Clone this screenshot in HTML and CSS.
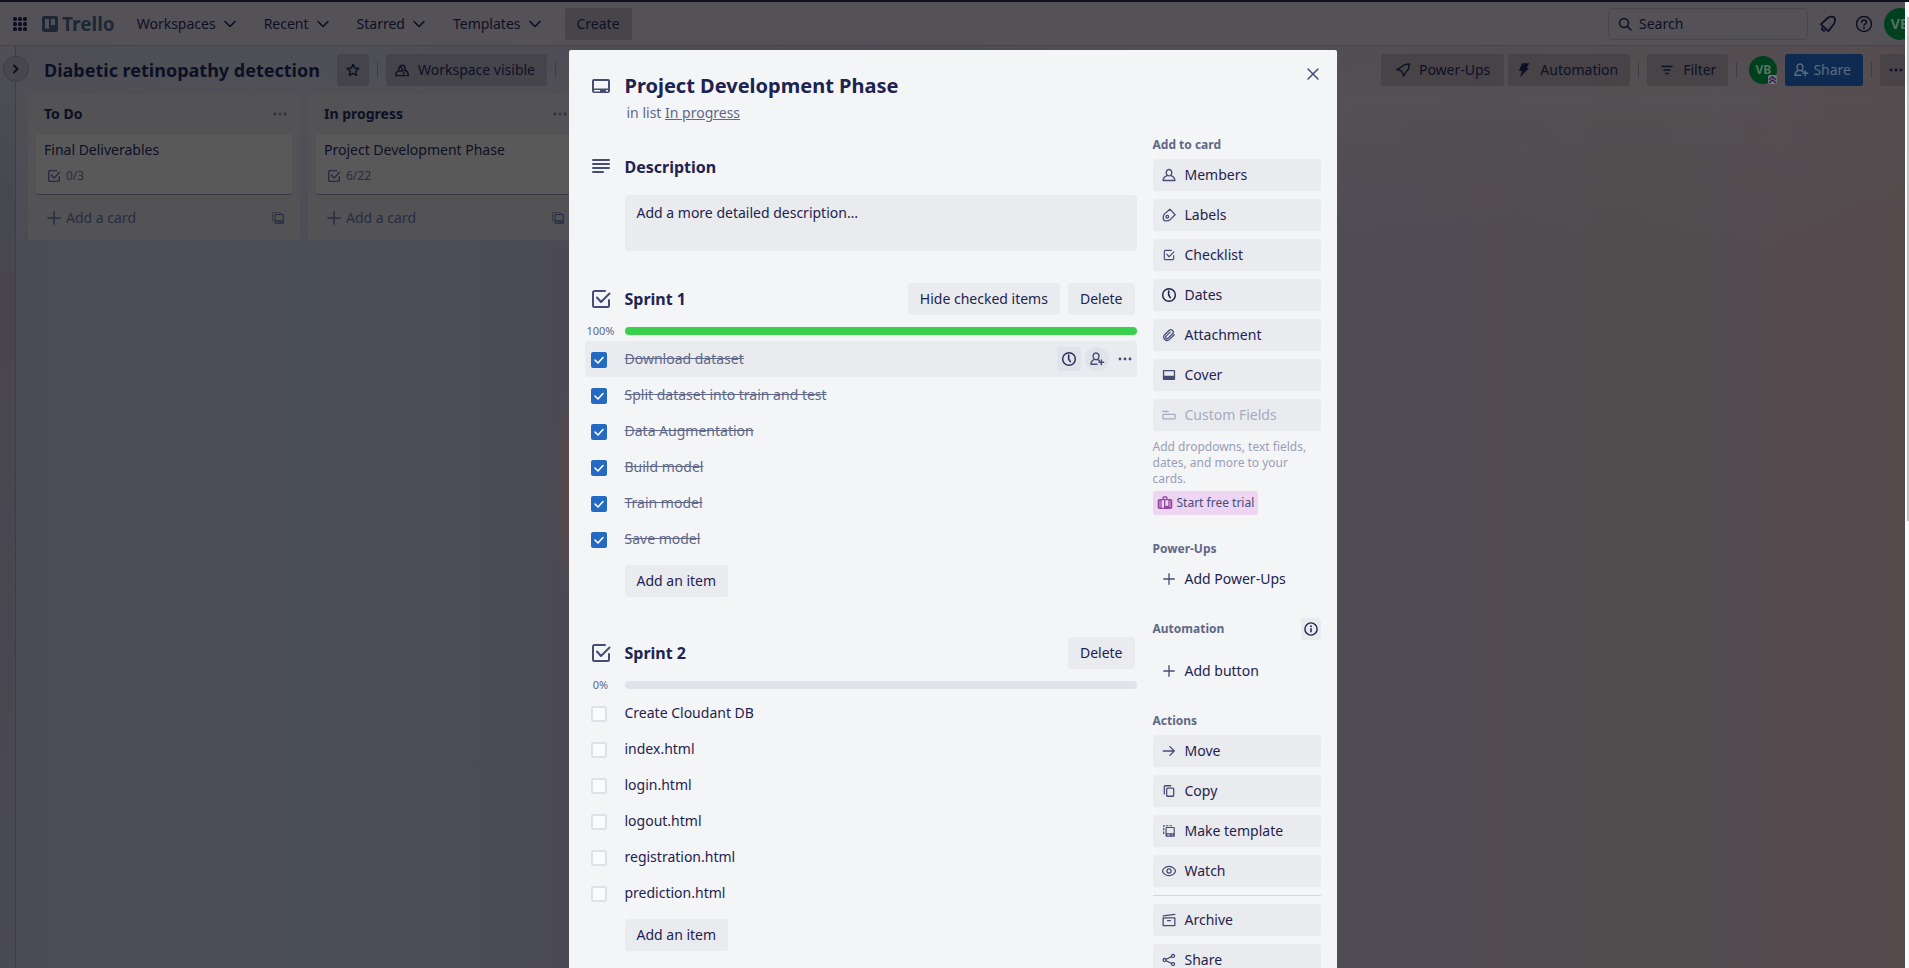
FILE: index.html
```html
<!DOCTYPE html>
<html lang="en">
<head>
<meta charset="utf-8">
<title>Project Development Phase | Trello</title>
<link rel="stylesheet" href="styles.css">
</head>
<body>
<svg class="sprite" aria-hidden="true">
  <symbol id="i-apps" viewBox="0 0 16 16"><g fill="currentColor"><rect x="1" y="1" width="4" height="4" rx="1.5"/><rect x="6" y="1" width="4" height="4" rx="1.5"/><rect x="11" y="1" width="4" height="4" rx="1.5"/><rect x="1" y="6" width="4" height="4" rx="1.5"/><rect x="6" y="6" width="4" height="4" rx="1.5"/><rect x="11" y="6" width="4" height="4" rx="1.5"/><rect x="1" y="11" width="4" height="4" rx="1.5"/><rect x="6" y="11" width="4" height="4" rx="1.5"/><rect x="11" y="11" width="4" height="4" rx="1.5"/></g></symbol>
  <symbol id="i-trello" viewBox="0 0 16 16"><path fill="currentColor" fill-rule="evenodd" d="M2 0h12a2 2 0 0 1 2 2v12a2 2 0 0 1-2 2H2a2 2 0 0 1-2-2V2a2 2 0 0 1 2-2zm1 3v9.500h4V3zm6 0v6h4V3z"/></symbol>
  <symbol id="i-down" viewBox="0 0 16 16"><path class="s" stroke-width="1.600" d="M3 5.500l5 5 5-5"/></symbol>
  <symbol id="i-right" viewBox="0 0 16 16"><path class="s" stroke-width="2" d="M6 4.500L9.500 8 6 11.500"/></symbol>
  <symbol id="i-search" viewBox="0 0 16 16"><circle class="s" cx="7" cy="7" r="4.500"/><path class="s" d="M10.500 10.500L14 14"/></symbol>
  <symbol id="i-bell" viewBox="0 0 24 24"><path class="s" stroke-width="2.400" d="M2.500 12.500L11.500 4c2.500-2 7-2.300 8.700-.8s1.500 6-.4 8.800L12.500 21.500z"/><path class="s" stroke-width="2.400" d="M4 17.500a3 3 0 0 0 3.500 3.300"/></symbol>
  <symbol id="i-help" viewBox="0 0 24 24"><circle class="s" stroke-width="2" cx="12" cy="12" r="10"/><path class="s" stroke-width="2" d="M8.800 9.500c0-4 6.400-4 6.400 0 0 2.300-3.200 2.200-3.200 4.600"/><circle cx="12" cy="17.300" r="1.300" fill="currentColor"/></symbol>
  <symbol id="i-star" viewBox="0 0 24 24"><path class="s" stroke-width="2.200" d="M12 3.500l2.600 5.500 6 .8-4.400 4.200 1.100 6-5.300-2.900L6.700 20l1.100-6-4.400-4.200 6-.8z"/></symbol>
  <symbol id="i-people" viewBox="0 0 24 24"><path class="s" stroke-width="2" d="M7.500 13C4.500 14 2.500 17 2.500 20.500h13c0-3.500-1.500-6.500-4.500-7.500M9.500 7.500a2.800 3 0 1 0 .1 0zM9.500 6a4.200 4.200 0 1 1 6 6c3.500 1 6 4 6 8.500H18.500"/></symbol>
  <symbol id="i-rocket" viewBox="0 0 24 24"><path class="s" stroke-width="2" d="M2.500 11.500L9 8c3-3.500 7-5 12.500-5 0 5-1.500 9-5 12l-3.500 6-2.500-6.500-1.500-1.500z"/></symbol>
  <symbol id="i-bolt" viewBox="0 0 24 24"><path fill="currentColor" d="M9 2h11l-4 7h3.500L6 23l3-9.500H4.500z"/></symbol>
  <symbol id="i-filter" viewBox="0 0 16 16"><path class="s" d="M3 4.500h10M5 8h6M7 11.500h2"/></symbol>
  <symbol id="i-addperson" viewBox="0 0 24 24"><path class="s" stroke-width="2.200" d="M12 20H3c0-3.500 2-6.200 5-7.500m2.500-9.500a4.500 5 0 1 0 .1 0zM13 13c1 .4 2 .9 2.500 1.500M18.500 13.500v7M15 17h7"/></symbol>
  <symbol id="i-dots" viewBox="0 0 16 16"><g fill="currentColor"><circle cx="3" cy="8" r="1.400"/><circle cx="8" cy="8" r="1.400"/><circle cx="13" cy="8" r="1.400"/></g></symbol>
  <symbol id="i-check" viewBox="0 0 24 24"><path class="s" stroke-width="2" d="M16 4H5.500A1.500 1.500 0 0 0 4 5.500v13A1.500 1.500 0 0 0 5.500 20h13a1.500 1.500 0 0 0 1.500-1.500V13M8 10.500l4 4.500 8.500-8.500"/></symbol>
  <symbol id="i-plus" viewBox="0 0 16 16"><path class="s" d="M8 2v12M2 8h12"/></symbol>
  <symbol id="i-template" viewBox="0 0 24 24"><path fill="currentColor" d="M2 2h3v2H4v1H2zm5 0h4v2H7zm6 0h4v2h-4zM2 7h2v4H2zm0 6h2v4H2z"/><path fill="currentColor" fill-rule="evenodd" d="M8 5h12a2 2 0 0 1 2 2v13a2 2 0 0 1-2 2H8a2 2 0 0 1-2-2V7a2 2 0 0 1 2-2zm0 2v9h12V7zm1 11v1.800h5V18zm8 0v1.800h2V18z"/></symbol>
  <symbol id="i-card" viewBox="0 0 24 24"><path fill="currentColor" fill-rule="evenodd" d="M5 5h14a2 2 0 0 1 2 2v10a2 2 0 0 1-2 2H5a2 2 0 0 1-2-2V7a2 2 0 0 1 2-2zm0 2v7.500h14V7zm0 9v1.400h6V16zm12 0v1.400h2V16z"/></symbol>
  <symbol id="i-desc" viewBox="0 0 24 24"><path class="s" stroke-width="2" d="M4 5h16M4 9h16M4 13h16M4 17h10"/></symbol>
  <symbol id="i-close" viewBox="0 0 16 16"><path class="s" d="M3 3l10 10M13 3L3 13"/></symbol>
  <symbol id="i-person" viewBox="0 0 24 24"><path class="s" stroke-width="2.400" d="M8.500 13C4.500 14.500 2 17 2 21.500h20c0-4.500-2.500-7-6.500-8.500M12 2.500a4.800 5.500 0 1 0 .1 0z"/></symbol>
  <symbol id="i-label" viewBox="0 0 24 24"><path class="s" stroke-width="2.200" d="M13.500 2L22.500 11.500 14 20C10 23 5 22.500 3.500 21S1 14 4 10.500z"/><circle class="s" stroke-width="2.200" cx="9" cy="15" r="2.300"/></symbol>
  <symbol id="i-clock" viewBox="0 0 24 24"><circle class="s" stroke-width="2.200" cx="12" cy="12" r="9.500"/><path class="s" stroke-width="2.400" d="M11.500 6v6l2.500 4"/></symbol>
  <symbol id="i-clip" viewBox="0 0 24 24"><path class="s" stroke-width="2.200" d="M21 11.500l-8 8c-5.500 5-13.500-2-8.500-8l8-7.500c4-3 8.800 1.500 6 5.500l-8 8c-2.500 2-5.500-1-3.500-3.500l7-7"/></symbol>
  <symbol id="i-cover" viewBox="0 0 24 24"><path fill="currentColor" fill-rule="evenodd" d="M3 3.500h18a1.500 1.500 0 0 1 1.500 1.500v14a1.500 1.500 0 0 1-1.500 1.500H3A1.500 1.500 0 0 1 1.500 19V5A1.500 1.500 0 0 1 3 3.500zm.8 2.200v7.500h16.400V5.700z"/></symbol>
  <symbol id="i-field" viewBox="0 0 24 24"><path class="s" stroke-width="2.200" d="M1.500 6h9M2.500 11h19a1 1 0 0 1 1 1v5.500a1 1 0 0 1-1 1h-19a1 1 0 0 1-1-1V12a1 1 0 0 1 1-1z"/></symbol>
  <symbol id="i-case" viewBox="0 0 24 24"><path fill="currentColor" fill-rule="evenodd" d="M8 6V4.500A2.500 2.500 0 0 1 10.500 2h3A2.500 2.500 0 0 1 16 4.500V6h4.500A2.500 2.500 0 0 1 23 8.500v10a2.500 2.500 0 0 1-2.500 2.500h-17A2.500 2.500 0 0 1 1 18.500v-10A2.500 2.500 0 0 1 3.500 6zm2 0h4V4h-4zm-3 2v11h3.500V8zm5.500 0v8H17V8zM4 8.500v10h1v-10zm15 0v10h1v-10z"/></symbol>
  <symbol id="i-info" viewBox="0 0 24 24"><circle class="s" stroke-width="2.400" cx="12" cy="12" r="10.500"/><path class="s" stroke-width="2.600" d="M12 11.500v5"/><circle cx="12" cy="7.300" r="1.600" fill="currentColor"/></symbol>
  <symbol id="i-arrow" viewBox="0 0 16 16"><path class="s" d="M1.500 8H14M9 3l5 5-5 5"/></symbol>
  <symbol id="i-copy" viewBox="0 0 24 24"><path class="s" stroke-width="2.200" d="M4 17V4.500A1.500 1.500 0 0 1 5.500 3H15M9.500 7h9A1.500 1.500 0 0 1 20 8.500v11a1.500 1.500 0 0 1-1.500 1.500h-9A1.500 1.500 0 0 1 8 19.500v-11A1.500 1.500 0 0 1 9.500 7z"/></symbol>
  <symbol id="i-eye" viewBox="0 0 24 24"><path class="s" stroke-width="2.200" d="M12 4C5 4 1 9.500 1 12s4 8 11 8 11-5.500 11-8-4-8-11-8z"/><circle class="s" stroke-width="2.200" cx="12" cy="12" r="3.500"/></symbol>
  <symbol id="i-archive" viewBox="0 0 24 24"><path class="s" stroke-width="2.200" d="M2 5L22 2.500M2 8.500h20V21.500H2zM9.500 13h5"/></symbol>
  <symbol id="i-share" viewBox="0 0 24 24"><g class="s" stroke-width="2.200"><circle cx="4.500" cy="12" r="2.600"/><circle cx="19" cy="5" r="2.600"/><circle cx="19" cy="19" r="2.600"/><path d="M7 10.700l9.500-4.500M7 13.300l9.500 4.500"/></g></symbol>
  <symbol id="i-tick" viewBox="0 0 16 16"><path class="s" stroke-width="1.600" d="M4 8l3 3 5-5.500"/></symbol>
  <symbol id="i-badge" viewBox="0 0 10 10"><rect width="10" height="10" rx="2" fill="#77757c"/><path class="s" stroke-width="1.500" d="M1.500 5L5 2l3.500 3M1.500 8.500L5 5.500l3.500 3"/></symbol>
</svg>

<div class="app">
  <header class="topbar">
    <button class="plain apps" aria-label="Apps"><svg class="icon"><use href="#i-apps"/></svg></button>
    <a class="brand" href="#"><svg class="icon"><use href="#i-trello"/></svg>Trello</a>
    <nav class="menu">
      <button class="plain">Workspaces<svg class="icon"><use href="#i-down"/></svg></button>
      <button class="plain">Recent<svg class="icon"><use href="#i-down"/></svg></button>
      <button class="plain">Starred<svg class="icon"><use href="#i-down"/></svg></button>
      <button class="plain">Templates<svg class="icon"><use href="#i-down"/></svg></button>
    </nav>
    <button class="create">Create</button>
    <div class="topbar-right">
      <label class="search"><svg class="icon"><use href="#i-search"/></svg><input type="text" placeholder="Search" aria-label="Search"></label>
      <button class="plain tool" aria-label="Notifications"><svg class="icon large"><use href="#i-bell"/></svg></button>
      <button class="plain tool" aria-label="Help"><svg class="icon large"><use href="#i-help"/></svg></button>
      <button class="avatar big">VB</button>
    </div>
  </header>

  <div class="workspace">
    <aside class="rail"><button class="expand" aria-label="Expand sidebar"><svg class="icon"><use href="#i-right"/></svg></button></aside>
    <main class="board">
      <div class="board-head">
        <h1>Diabetic retinopathy detection</h1>
        <button class="bbtn square" aria-label="Star board"><svg class="icon"><use href="#i-star"/></svg></button>
        <span class="sep"></span>
        <button class="bbtn"><svg class="icon"><use href="#i-people"/></svg>Workspace visible</button>
        <span class="sep"></span>
        <div class="board-tools">
          <div class="pair">
            <button class="bbtn wide"><svg class="icon"><use href="#i-rocket"/></svg>Power-Ups</button>
            <button class="bbtn"><svg class="icon"><use href="#i-bolt"/></svg>Automation</button>
          </div>
          <span class="sep"></span>
          <button class="bbtn even"><svg class="icon"><use href="#i-filter"/></svg>Filter</button>
          <span class="sep"></span>
          <span class="member"><button class="avatar">VB</button><svg class="admin"><use href="#i-badge"/></svg></span>
          <button class="bbtn share"><svg class="icon"><use href="#i-addperson"/></svg>Share</button>
          <span class="sep"></span>
          <button class="bbtn square" aria-label="Show menu"><svg class="icon"><use href="#i-dots"/></svg></button>
        </div>
      </div>
      <div class="lists">
        <section class="list">
          <div class="list-head"><h2>To Do</h2><button class="plain" aria-label="List actions"><svg class="icon"><use href="#i-dots"/></svg></button></div>
          <article class="card"><div>Final Deliverables</div><div class="count"><svg class="icon"><use href="#i-check"/></svg>0/3</div></article>
          <div class="list-foot"><button class="plain add"><svg class="icon"><use href="#i-plus"/></svg>Add a card</button><button class="plain" aria-label="Create from template"><svg class="icon small"><use href="#i-template"/></svg></button></div>
        </section>
        <section class="list">
          <div class="list-head"><h2>In progress</h2><button class="plain" aria-label="List actions"><svg class="icon"><use href="#i-dots"/></svg></button></div>
          <article class="card"><div>Project Development Phase</div><div class="count"><svg class="icon"><use href="#i-check"/></svg>6/22</div></article>
          <div class="list-foot"><button class="plain add"><svg class="icon"><use href="#i-plus"/></svg>Add a card</button><button class="plain" aria-label="Create from template"><svg class="icon small"><use href="#i-template"/></svg></button></div>
        </section>
      </div>
    </main>
  </div>

  <div class="overlay">
    <div class="dialog" role="dialog" aria-labelledby="card-title">
      <button class="plain close" aria-label="Close"><svg class="icon"><use href="#i-close"/></svg></button>
      <header class="card-head">
        <svg class="icon lead"><use href="#i-card"/></svg>
        <div><h2 id="card-title">Project Development Phase</h2><p>in list <a href="#">In progress</a></p></div>
      </header>
      <div class="card-body">
        <div class="content">
          <section>
            <div class="section-head"><svg class="icon lead"><use href="#i-desc"/></svg><h3>Description</h3></div>
            <button class="description">Add a more detailed description…</button>
          </section>
          <section class="checklist">
            <div class="section-head"><svg class="icon lead"><use href="#i-check"/></svg><h3>Sprint 1</h3><button class="btn">Hide checked items</button><button class="btn">Delete</button></div>
            <div class="progress"><span>100%</span><div class="track"><div class="fill" style="width:100%"></div></div></div>
            <ul>
              <li class="hover"><span class="tick"><input type="checkbox" id="a1" checked><svg><use href="#i-tick"/></svg></span><label for="a1">Download dataset</label>
                <button class="mini" aria-label="Due date"><svg class="icon dark"><use href="#i-clock"/></svg></button><button class="mini round" aria-label="Assign"><svg class="icon"><use href="#i-addperson"/></svg></button><button class="mini bare" aria-label="More"><svg class="icon"><use href="#i-dots"/></svg></button></li>
              <li><span class="tick"><input type="checkbox" id="a2" checked><svg><use href="#i-tick"/></svg></span><label for="a2">Split dataset into train and test</label></li>
              <li><span class="tick"><input type="checkbox" id="a3" checked><svg><use href="#i-tick"/></svg></span><label for="a3">Data Augmentation</label></li>
              <li><span class="tick"><input type="checkbox" id="a4" checked><svg><use href="#i-tick"/></svg></span><label for="a4">Build model</label></li>
              <li><span class="tick"><input type="checkbox" id="a5" checked><svg><use href="#i-tick"/></svg></span><label for="a5">Train model</label></li>
              <li><span class="tick"><input type="checkbox" id="a6" checked><svg><use href="#i-tick"/></svg></span><label for="a6">Save model</label></li>
            </ul>
            <button class="btn add-item">Add an item</button>
          </section>
          <section class="checklist">
            <div class="section-head"><svg class="icon lead"><use href="#i-check"/></svg><h3>Sprint 2</h3><button class="btn">Delete</button></div>
            <div class="progress"><span>0%</span><div class="track"><div class="fill" style="width:0%"></div></div></div>
            <ul>
              <li><span class="tick"><input type="checkbox" id="b1"></span><label for="b1">Create Cloudant DB</label></li>
              <li><span class="tick"><input type="checkbox" id="b2"></span><label for="b2">index.html</label></li>
              <li><span class="tick"><input type="checkbox" id="b3"></span><label for="b3">login.html</label></li>
              <li><span class="tick"><input type="checkbox" id="b4"></span><label for="b4">logout.html</label></li>
              <li><span class="tick"><input type="checkbox" id="b5"></span><label for="b5">registration.html</label></li>
              <li><span class="tick"><input type="checkbox" id="b6"></span><label for="b6">prediction.html</label></li>
            </ul>
            <button class="btn add-item">Add an item</button>
          </section>
        </div>
        <aside class="side">
          <section>
            <h4>Add to card</h4>
            <div class="stack">
              <button class="btn"><svg class="icon"><use href="#i-person"/></svg>Members</button>
              <button class="btn"><svg class="icon"><use href="#i-label"/></svg>Labels</button>
              <button class="btn"><svg class="icon"><use href="#i-check"/></svg>Checklist</button>
              <button class="btn"><svg class="icon strong"><use href="#i-clock"/></svg>Dates</button>
              <button class="btn"><svg class="icon"><use href="#i-clip"/></svg>Attachment</button>
              <button class="btn"><svg class="icon"><use href="#i-cover"/></svg>Cover</button>
              <button class="btn off" disabled><svg class="icon"><use href="#i-field"/></svg>Custom Fields</button>
            </div>
            <p class="hint">Add dropdowns, text fields, dates, and more to your cards.</p>
            <button class="trial"><svg class="icon"><use href="#i-case"/></svg>Start free trial</button>
          </section>
          <section>
            <h4>Power-Ups</h4>
            <div class="stack"><button class="btn clear"><svg class="icon"><use href="#i-plus"/></svg>Add Power-Ups</button></div>
          </section>
          <section>
            <div class="auto-head"><h4>Automation</h4><button class="info" aria-label="About automation"><svg class="icon"><use href="#i-info"/></svg></button></div>
            <div class="stack"><button class="btn clear"><svg class="icon"><use href="#i-plus"/></svg>Add button</button></div>
          </section>
          <section>
            <h4>Actions</h4>
            <div class="stack">
              <button class="btn"><svg class="icon"><use href="#i-arrow"/></svg>Move</button>
              <button class="btn"><svg class="icon"><use href="#i-copy"/></svg>Copy</button>
              <button class="btn"><svg class="icon"><use href="#i-template"/></svg>Make template</button>
              <button class="btn"><svg class="icon"><use href="#i-eye"/></svg>Watch</button>
              <hr>
              <button class="btn"><svg class="icon"><use href="#i-archive"/></svg>Archive</button>
              <button class="btn"><svg class="icon"><use href="#i-share"/></svg>Share</button>
            </div>
          </section>
        </aside>
      </div>
    </div>
  </div>
  <div class="scrollbar"><div class="thumb"></div></div>
</div>
</body>
</html>
```

FILE: styles.css
```css
* { box-sizing: border-box; }

body {
  margin: 0;
  font: 14px/20px "Noto Sans", "Open Sans", sans-serif;
  color: #0c1024;
}

h1, h2, h3, h4, p, ul { margin: 0; padding: 0; }
ul { list-style: none; }

button {
  border: 0;
  padding: 0;
  font: inherit;
  color: inherit;
  display: flex;
  align-items: center;
  white-space: nowrap;
}

.sprite { display: none; }
.s { fill: none; stroke: currentColor; stroke-linecap: round; stroke-linejoin: round; }
symbol .s:not([stroke-width]) { stroke-width: 1.5; }

.icon { width: 16px; height: 16px; flex: none; }
.icon.small { width: 14px; height: 14px; }
.icon.large { width: 18px; height: 18px; }
.plain { background: none; }

.app {
  position: relative;
  height: 100vh;
  overflow: hidden;
  display: flex;
  flex-direction: column;
  border-top: 2px solid #101220;
  background:
    radial-gradient(ellipse 20px 110px at 574px 488px, #5a4745 0%, #564849 45%, #4b4a5400 100%),
    linear-gradient(180deg, #58555a00 0%, #56525599 10%, #52505500 26%),
    linear-gradient(90deg, #4a4b55 0%, #4a4e58 16%, #4b4a54 30%, #504c54 70%, #514b52 78%, #504c4e 84%, #514c4f 90%, #544b4f 93%, #54494b 100%);
}

/* Top navigation */
.topbar {
  display: flex;
  align-items: center;
  height: 44px;
  flex: none;
  padding-left: 12px;
  background: #555257;
  border-bottom: 1px solid #464349;
}
.brand {
  display: flex;
  align-items: center;
  gap: 4px;
  margin: 0 22px 0 14px;
  font-size: 19px;
  font-weight: 700;
  color: #1c2837;
  text-decoration: none;
}
.menu { display: flex; gap: 26px; }
.menu button { gap: 6px; }
.create {
  height: 32px;
  margin-left: 22px;
  padding: 0 12px;
  border-radius: 3px;
  background: #474549;
}
.topbar-right {
  display: flex;
  align-items: center;
  margin: 0 -7px 0 auto;
}
.search {
  display: flex;
  align-items: center;
  gap: 6px;
  width: 200px;
  height: 32px;
  margin-right: 11px;
  padding: 0 8px;
  border: 1px solid #49474b;
  border-radius: 5px;
}
.search input {
  width: 100%;
  border: 0;
  padding: 0;
  background: none;
  font: inherit;
}
.search input::placeholder { color: #0c1024; opacity: 1; }
.tool { margin-right: 18px; }
.tool + .avatar { margin-left: -7px; }
.avatar {
  justify-content: center;
  width: 28px;
  height: 28px;
  border-radius: 50%;
  background: #00401f;
  color: #55755f;
  font-size: 12px;
  font-weight: 700;
}
.avatar.big { width: 32px; height: 32px; font-size: 14px; }

/* Board */
.workspace { display: flex; flex: 1; }
.rail {
  width: 16px;
  flex: none;
  padding-top: 10px;
  background: linear-gradient(180deg, #4f4f55, #474a50 120px, #48454e 240px, #4a4a54);
  border-right: 1px solid #3e3e46;
}
.expand {
  position: relative;
  z-index: 1;
  justify-content: center;
  width: 26px;
  height: 26px;
  margin-left: 3px;
  border: 1px solid #3c3c43;
  border-radius: 50%;
  background: #47474d;
}
.board { flex: 1; min-width: 0; }
.board-head {
  display: flex;
  align-items: center;
  gap: 8px;
  padding: 8px 0 8px 28px;
}
.board-head h1 {
  font-size: 18px;
  line-height: 32px;
  padding-right: 9px;
  white-space: nowrap;
}
.sep { width: 1px; height: 16px; background: #403e45; }
.bbtn {
  gap: 8px;
  height: 32px;
  padding: 0 12px 0 8px;
  border-radius: 3px;
  background: #45444a;
}
.bbtn.square { width: 32px; padding: 0; justify-content: center; }
.bbtn.even { padding-left: 12px; }
.bbtn.wide { padding: 0 14px; }
.bbtn.share { gap: 4px; background: #0d2b50; color: #5c6c82; }
.board-tools {
  display: flex;
  align-items: center;
  gap: 8px;
  margin: 0 -3px 0 auto;
}
.board-tools .bbtn:not(.share) { background: #484347; }
.pair { display: flex; gap: 4px; }
.member { position: relative; margin-left: 4px; }
.admin {
  position: absolute;
  right: 0;
  bottom: 0;
  width: 9px;
  height: 9px;
  color: #2c1a55;
}
.lists { display: flex; align-items: flex-start; gap: 8px; padding-left: 12px; }
.list {
  width: 272px;
  height: 146px;
  flex: none;
  padding: 0 8px;
  border-radius: 3px;
  background: #535254;
}
.list-head {
  display: flex;
  align-items: center;
  justify-content: space-between;
  height: 40px;
  padding-left: 8px;
  color: #2c3042;
}
.list-head h2 { font-size: 14px; color: #0c1024; }
.list-head button { padding-right: 4px; }
.card {
  padding: 6px 8px 8px;
  height: 60px;
  border-radius: 3px;
  background: #5a595a;
  box-shadow: 0 1px 0 #3a3b48;
}
.count {
  display: flex;
  align-items: center;
  gap: 4px;
  margin: 6px 0 0 2px;
  font-size: 12px;
  color: #272b40;
}
.list-foot {
  display: flex;
  align-items: center;
  justify-content: space-between;
  height: 48px;
  padding: 0 7px 0 10px;
  color: #292d41;
}
.list-foot .add { gap: 4px; }

/* Card dialog */
.overlay {
  position: absolute;
  inset: 0 4px 0 0;
  display: flex;
  justify-content: center;
  padding-top: 48px;
}
.dialog {
  position: relative;
  width: 768px;
  max-width: 100%;
  height: max-content;
  border-radius: 2px;
  background: #f4f5f7;
  color: #1e2350;
}
.dialog .icon { color: #454d75; }
.dialog .icon.dark { color: #2a3060; }
.close { position: absolute; top: 16px; right: 16px; }
.card-head { display: flex; padding: 24px 60px 12px 16px; }
.card-head h2 { font-size: 20px; line-height: 24px; }
.card-head p { margin: 5px 0 0 2px; color: #606888; }
.card-head a { color: inherit; }
.icon.lead { width: 24px; height: 24px; margin: 0 12px 0 4px; }
.card-body { display: flex; gap: 16px; padding: 0 16px 60px; }
.content {
  flex: 1;
  min-width: 0;
  display: flex;
  flex-direction: column;
  gap: 32px;
  padding-top: 16px;
}
.section-head { display: flex; align-items: center; gap: 8px; height: 32px; padding-right: 2px; }
.section-head .lead { margin-right: 4px; }
.section-head h3 { flex: 1; font-size: 16px; }
.btn {
  height: 32px;
  padding: 0 12px;
  border-radius: 3px;
  background: #eaebef;
}
.description {
  align-items: flex-start;
  width: calc(100% - 40px);
  height: 56px;
  margin: 12px 0 0 40px;
  padding: 8px 12px;
  border-radius: 3px;
  background: #eaebef;
}
.checklist { padding-bottom: 8px; }
.progress { display: flex; align-items: center; gap: 8px; margin: 8px 0 2px; }
.progress span { width: 32px; text-align: center; font-size: 11px; line-height: 16px; color: #606888; }
.track { flex: 1; height: 8px; border-radius: 4px; overflow: hidden; background: #e1e3ea; }
.fill { height: 100%; background: #39d04e; }
.checklist li {
  display: flex;
  align-items: center;
  height: 36px;
  padding: 0 4px 0 6px;
  border-radius: 3px;
}
.checklist li.hover { background: #eaebef; }
.checklist label { flex: 1; }
.tick { display: grid; width: 16px; height: 16px; margin: 2px 18px 0 0; }
.tick > * { grid-area: 1 / 1; width: 16px; height: 16px; }
.tick svg { position: relative; color: #fff; pointer-events: none; }
.tick input {
  appearance: none;
  margin: 0;
  border: 2px solid #dfe1e7;
  border-radius: 2px;
  background: #fafbfc;
}
.tick input:checked { border: 0; background: #246ac3; }
.tick:has(:checked) + label { color: #606888; text-decoration: line-through; }
.mini {
  justify-content: center;
  width: 24px;
  height: 24px;
  margin-left: 4px;
  border-radius: 3px;
  background: #e1e3ea;
}
.mini.round { border-radius: 50%; }
.mini.bare { width: 16px; margin-left: 8px; background: none; }
.add-item { margin: 8px 0 0 40px; }

.side { width: 168px; flex: none; display: flex; flex-direction: column; gap: 24px; }
.side h4 { margin-bottom: 4px; font-size: 12px; line-height: 20px; color: #606888; }
.stack { display: flex; flex-direction: column; gap: 8px; }
.stack .btn { gap: 8px; padding: 0 8px; }
.stack .icon { width: 14px; height: 14px; margin: 0 1px; }
.dialog .icon.strong { width: 16px; height: 16px; margin: 0; color: #1e2350; }
.btn.clear { background: none; }
.btn.off, .dialog .off .icon { color: #a6abc0; }
.hint { margin: 8px 0 4px; font-size: 12px; line-height: 16px; color: #9a9fb6; }
.trial {
  gap: 4px;
  height: 24px;
  padding: 0 4px;
  border-radius: 3px;
  background: #efd5f4;
  font-size: 12px;
  color: #454d75;
}
.dialog .trial .icon { color: #964ba2; }
.auto-head { display: flex; align-items: center; justify-content: space-between; height: 20px; margin-bottom: 16px; }
.auto-head h4 { margin: 0; }
.info { justify-content: center; width: 20px; height: 22px; border-radius: 3px; background: #eaebef; }
.dialog .info .icon { width: 14px; height: 14px; color: #1e2350; }
.side hr { width: 100%; height: 1px; margin: 0; border: 0; background: #d3d5dc; }

.scrollbar {
  position: absolute;
  top: 0;
  right: 0;
  bottom: 0;
  width: 4px;
  padding: 15px 0 0 2px;
  background: #fafafa;
}
.thumb { height: 53%; background: #c1c1c1; }
```
